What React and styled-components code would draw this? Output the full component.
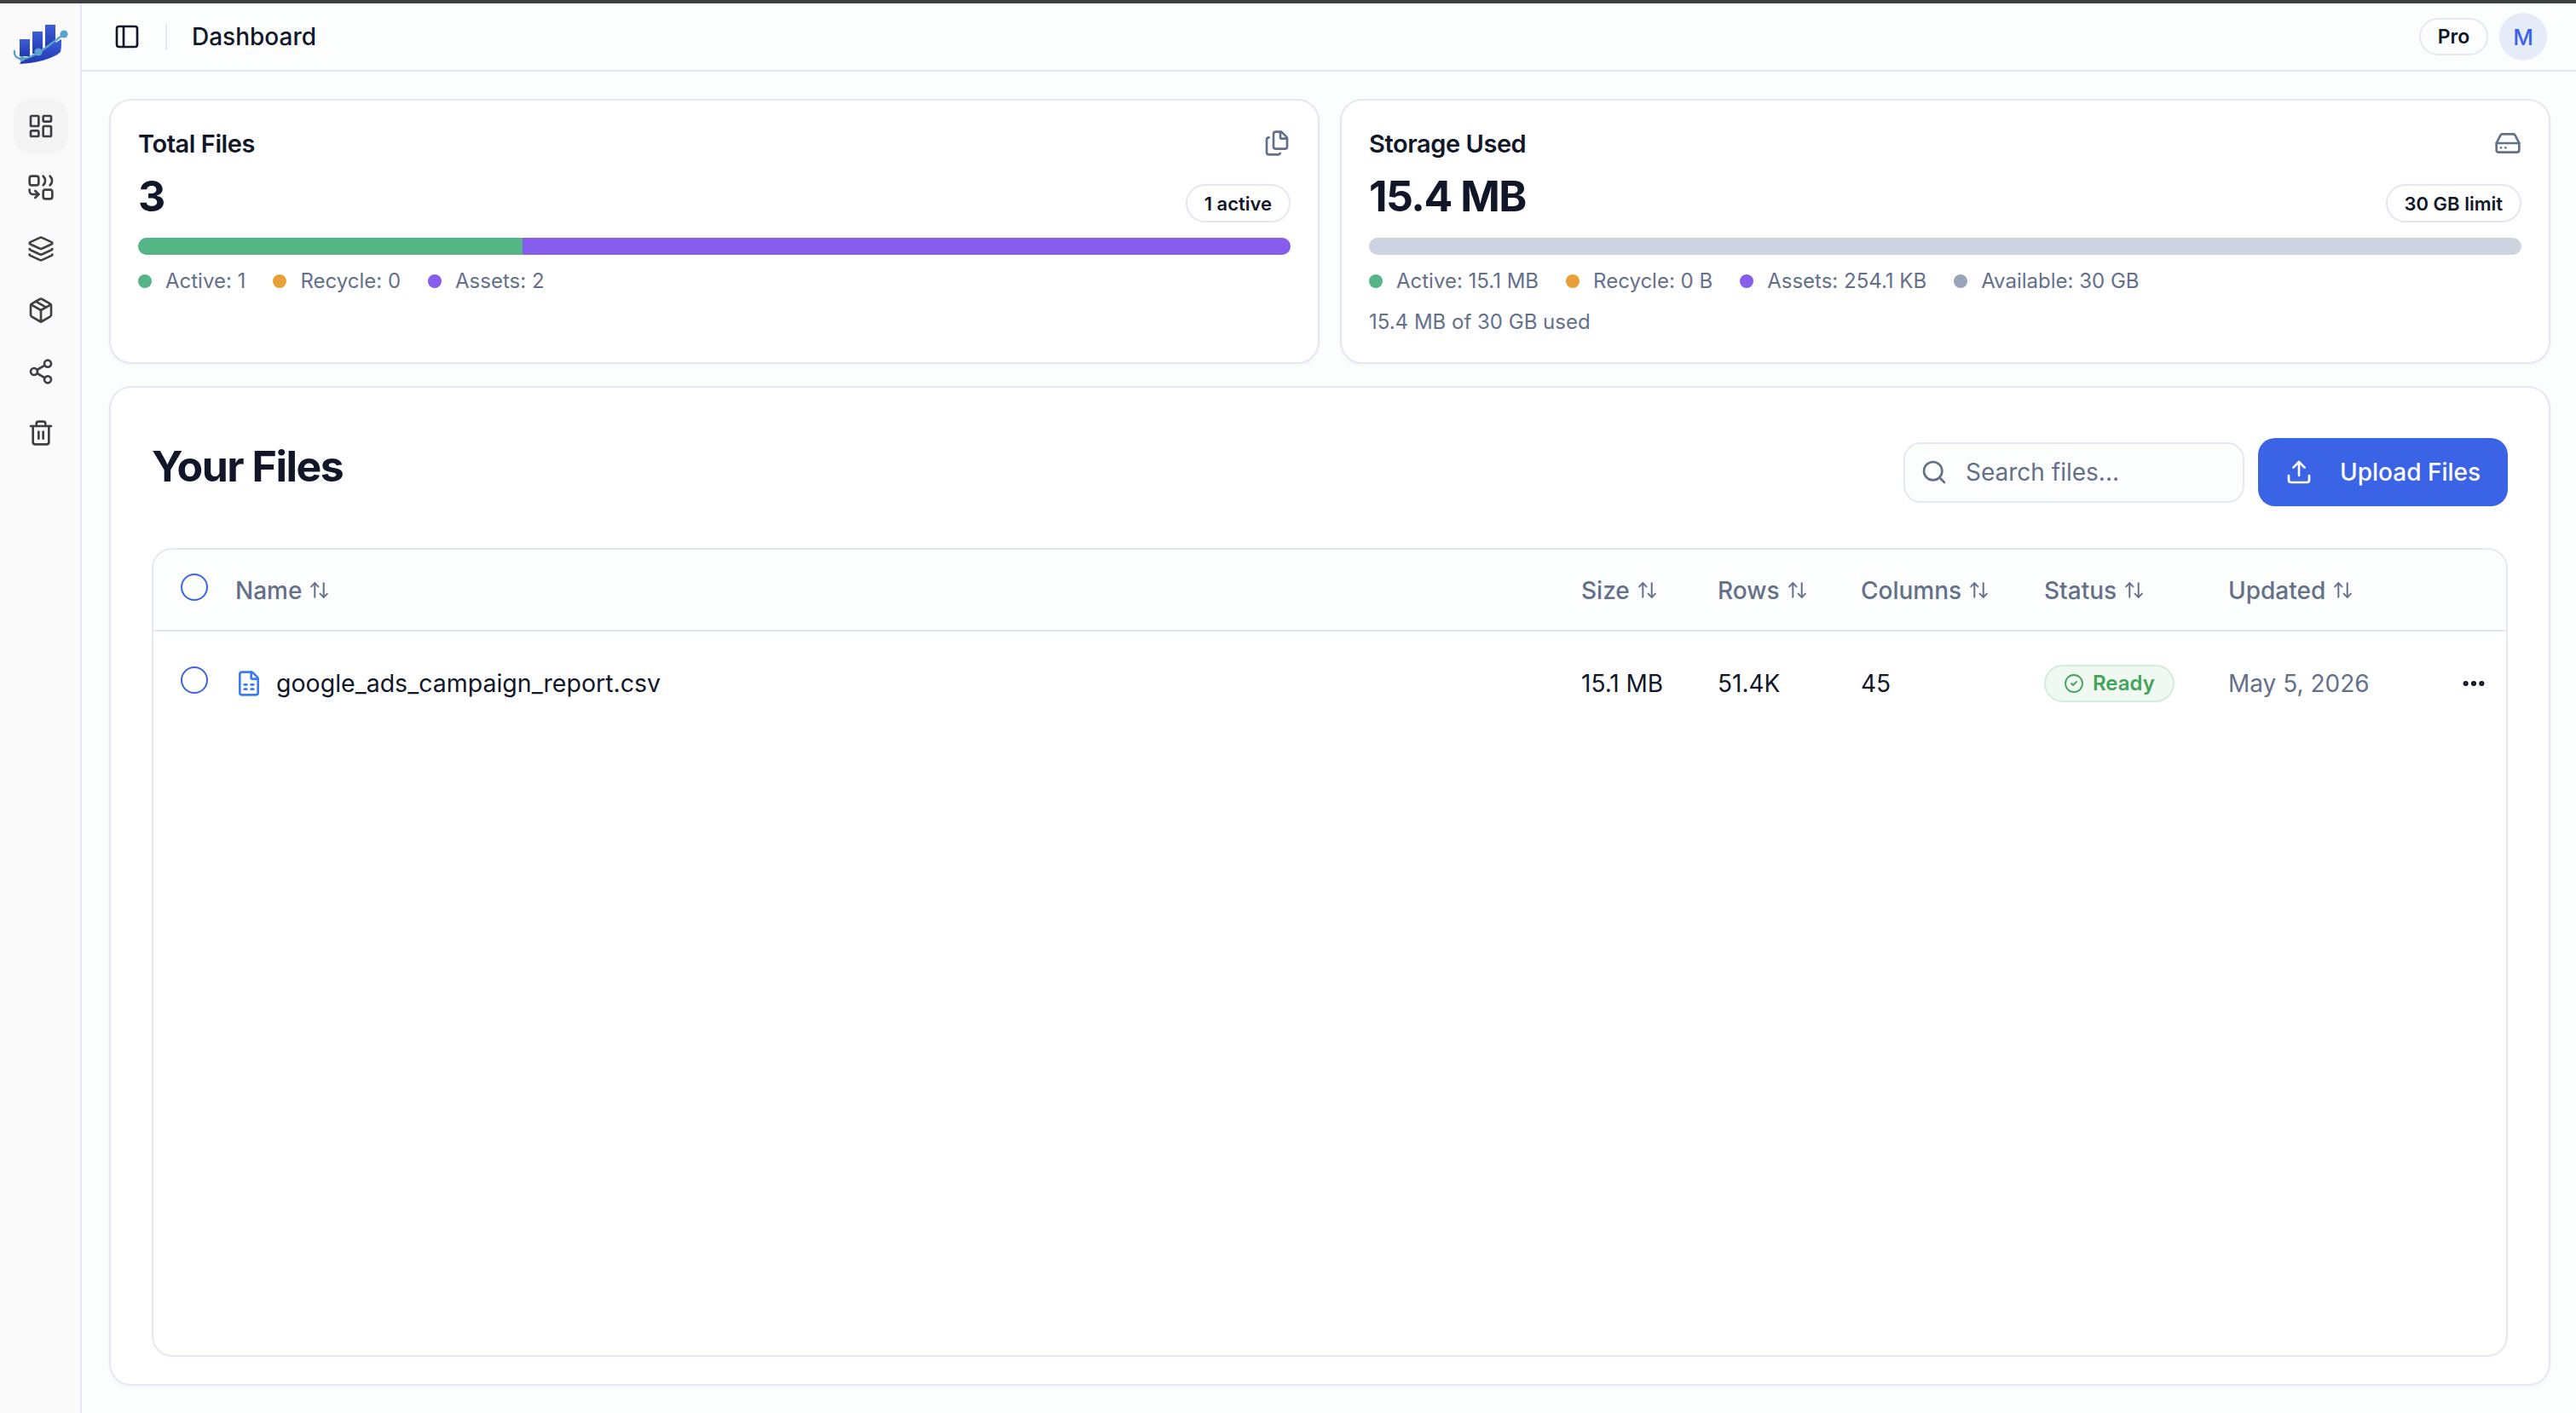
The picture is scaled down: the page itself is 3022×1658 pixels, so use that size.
import React from "react";
import styled, { createGlobalStyle } from "styled-components";
import {
  ArrowUpDown,
  CircleCheck,
  Ellipsis,
  FileSpreadsheet,
  Files,
  HardDrive,
  Layers,
  LayoutDashboard,
  Package,
  PanelLeft,
  Search,
  Share2,
  Trash2,
  Upload,
} from "lucide-react";

const GlobalStyle = createGlobalStyle`
  * { box-sizing: border-box; }
  html, body { margin: 0; padding: 0; height: 100%; }
  body {
    font-family: Inter, "Liberation Sans", sans-serif;
    background: #fcfdfd;
    color: #111729;
  }
`;

const Page = styled.div`
  min-height: 100vh;
  display: flex;
  flex-direction: column;
  border-top: 4px solid #404040;
`;

const Shell = styled.div`
  flex: 1;
  display: flex;
`;

const Sidebar = styled.aside`
  width: 96px;
  flex-shrink: 0;
  background: #fafafa;
  border-right: 2px solid #e5e8f2;
  display: flex;
  flex-direction: column;
`;

const LogoBox = styled.div`
  height: 80px;
  display: flex;
  align-items: center;
  justify-content: center;
  padding: 16px 0 0 2px;
`;

const Nav = styled.nav`
  margin-top: 32px;
  padding: 0 16px;
  display: flex;
  flex-direction: column;
  gap: 8px;
`;

const NavItem = styled.div`
  width: 64px;
  height: 64px;
  border-radius: 20px;
  display: flex;
  align-items: center;
  justify-content: center;
  color: #3f3f46;
  background: ${(p) => (p.$active ? "#f4f4f5" : "transparent")};
`;

const Main = styled.main`
  flex: 1;
  min-width: 0;
  display: flex;
  flex-direction: column;
`;

const TopBar = styled.header`
  height: 80px;
  border-bottom: 2px solid #e5e8f2;
  display: flex;
  align-items: center;
  padding: 0 34px 0 37px;
  color: #111729;
`;

const Divider = styled.div`
  width: 2px;
  height: 31px;
  background: #e5e8f2;
  margin: 0 29px;
`;

const PageTitle = styled.div`
  font-size: 28px;
  font-weight: 500;
  flex: 1;
`;

const ProPill = styled.div`
  height: 44px;
  width: 81px;
  border-radius: 22px;
  border: 2px solid #e5e8f2;
  display: flex;
  align-items: center;
  justify-content: center;
  font-size: 23px;
  font-weight: 600;
  margin-right: 13px;
`;

const Avatar = styled.div`
  width: 56px;
  height: 56px;
  border-radius: 50%;
  background: #e6ebf8;
  color: #3b63e6;
  font-size: 26px;
  font-weight: 500;
  display: flex;
  align-items: center;
  justify-content: center;
`;

const Content = styled.div`
  flex: 1;
  display: flex;
  flex-direction: column;
  gap: 26px;
  padding: 32px 30px 32px 32px;
`;

const Stats = styled.div`
  display: grid;
  grid-template-columns: 1fr 1fr;
  gap: 24px;
`;

const Card = styled.section`
  background: #fff;
  border: 2px solid #e5e8f2;
  border-radius: 26px;
  box-shadow: 0 2px 4px rgba(17, 23, 41, 0.04);
`;

const StatCard = styled(Card)`
  padding: 35px 32px 33px;
`;

const StatHead = styled.div`
  height: 30px;
  display: flex;
  align-items: center;
  justify-content: space-between;
  color: #64708a;
`;

const StatTitle = styled.h3`
  margin: 0;
  font-size: 29px;
  font-weight: 600;
  letter-spacing: -0.015em;
  color: #111729;
`;

const StatRow = styled.div`
  margin-top: 19px;
  height: 61px;
  display: flex;
  justify-content: space-between;
`;

const StatValue = styled.div`
  font-size: 50px;
  line-height: 56px;
  font-weight: 700;
  letter-spacing: -0.03em;
  color: #111729;
`;

const Badge = styled.div`
  align-self: flex-end;
  height: 45px;
  margin-bottom: 2px;
  padding: 0 20px;
  border: 2px solid #e5e8f2;
  border-radius: 23px;
  background: #fff;
  font-size: 22px;
  font-weight: 600;
  display: flex;
  align-items: center;
`;

const Bar = styled.div`
  margin-top: 16px;
  height: 20px;
  border-radius: 10px;
  overflow: hidden;
  background: #cdd4e0;
  display: flex;
`;

const BarPart = styled.div`
  background: ${(p) => p.$color};
  flex: ${(p) => p.$grow};
`;

const Legend = styled.div`
  margin-top: 17px;
  display: flex;
  gap: 32px;
`;

const LegendItem = styled.div`
  display: flex;
  align-items: center;
  gap: 16px;
  font-size: 24px;
  line-height: 28px;
  color: #64708a;
`;

const Dot = styled.span`
  width: 16px;
  height: 16px;
  border-radius: 50%;
  background: ${(p) => p.$color};
`;

const UsedNote = styled.div`
  margin-top: 20px;
  font-size: 24px;
  line-height: 28px;
  color: #64708a;
`;

const FilesCard = styled(Card)`
  flex: 1;
  display: flex;
  flex-direction: column;
  padding: 59px 48px 32px;
`;

const Toolbar = styled.div`
  display: flex;
  align-items: center;
  gap: 16px;
  margin-bottom: 49px;
`;

const FilesTitle = styled.h2`
  flex: 1;
  margin: 0 0 14px;
  font-size: 50px;
  font-weight: 700;
  letter-spacing: -0.03em;
  color: #111729;
`;

const SearchBox = styled.div`
  width: 400px;
  height: 71px;
  border: 2px solid #e5e8f2;
  border-radius: 20px;
  background: #fcfdfd;
  display: flex;
  align-items: center;
  gap: 19px;
  padding: 0 18px;
  color: #64708a;
`;

const SearchInput = styled.input`
  flex: 1;
  min-width: 0;
  border: 0;
  outline: 0;
  background: transparent;
  font: 400 28px Inter, "Liberation Sans", sans-serif;
  color: #111729;
  &::placeholder {
    color: #64708a;
    opacity: 1;
  }
`;

const UploadButton = styled.button`
  width: 293px;
  height: 80px;
  border: 0;
  border-radius: 20px;
  background: #3b63e6;
  color: #fff;
  font: 500 28px Inter, "Liberation Sans", sans-serif;
  display: flex;
  align-items: center;
  gap: 32px;
  padding: 0 0 0 32px;
`;

const Table = styled.div`
  flex: 1;
  border: 2px solid #e5e8f2;
  border-radius: 24px;
  overflow: hidden;
`;

const Row = styled.div`
  display: grid;
  grid-template-columns: 96px 1fr 160px 168px 215px 216px 276px 50px;
  align-items: center;
  height: ${(p) => (p.$head ? "96px" : "120px")};
  padding-top: 1px;
  background: ${(p) => (p.$head ? "#fcfdfd" : "#fff")};
  border-bottom: ${(p) => (p.$head ? "2px solid #e5e8f2" : "0")};
`;

const Radio = styled.span`
  display: block;
  width: 32px;
  height: 32px;
  border: 2px solid #3b63e6;
  border-radius: 50%;
  margin: 0 0 8px 32px;
`;

const HeadCell = styled.div`
  display: flex;
  align-items: center;
  gap: 8px;
  font-size: 28px;
  font-weight: 500;
  color: #64708a;
`;

const NameCell = styled.div`
  display: flex;
  align-items: center;
  gap: 16px;
  font-size: 28.5px;
  color: #3f7bf0;
`;

const FileName = styled.span`
  color: #111729;
`;

const Cell = styled.div`
  font-size: 28px;
  color: ${(p) => (p.$muted ? "#64708a" : "#111729")};
`;

const ReadyBadge = styled.div`
  display: inline-flex;
  align-items: center;
  gap: 10px;
  height: 44px;
  padding: 0 21px;
  border: 2px solid #d3edd9;
  border-radius: 22px;
  background: #f0f8f2;
  color: #43a35a;
  font-size: 24px;
  font-weight: 600;
`;

const Actions = styled.div`
  color: #111729;
  display: flex;
  margin-left: -4px;
`;

function Logo() {
  return (
    <svg width="70" height="54" viewBox="14 25 70 54">
      <defs>
        <linearGradient id="logoBlue" x1="0" y1="0" x2="0" y2="1">
          <stop offset="0" stopColor="#3b5fd8" />
          <stop offset="1" stopColor="#2437b4" />
        </linearGradient>
      </defs>
      <rect x="24" y="46" width="12" height="20" fill="url(#logoBlue)" />
      <rect x="39" y="37" width="12" height="26" fill="url(#logoBlue)" />
      <rect x="54" y="29" width="12" height="30" fill="url(#logoBlue)" />
      <path d="M24 75C42 74 62 70 72 61C73 57 73 51 73 46L46 62L27 70Z" fill="url(#logoBlue)" />
      <path d="M18 60C17 66 22 70 29 69C40 67 50 60 76 40" fill="none" stroke="#5ba3cc" strokeWidth="2.4" strokeLinecap="round" />
      <circle cx="27" cy="69" r="3" fill="#5ba3cc" />
      <circle cx="46" cy="61" r="4.6" fill="#5ba3cc" />
      <circle cx="76" cy="40" r="4.6" fill="#5ba3cc" />
    </svg>
  );
}

function SwapIcon() {
  return (
    <svg width="32" height="32" viewBox="0 0 24 24" fill="none" stroke="currentColor" strokeWidth="2" strokeLinecap="round" strokeLinejoin="round">
      <rect x="2" y="2" width="8" height="8" rx="2" />
      <path d="M14 2c1.2 1 1.8 2.4 1.8 4s-.6 3-1.8 4" />
      <path d="M20 2c1.2 1 1.8 2.4 1.8 4s-.6 3-1.8 4" />
      <rect x="14" y="14" width="8" height="8" rx="2" />
      <path d="M2 14v1a3 3 0 0 0 3 3h5" />
      <path d="m7 15 3 3-3 3" />
    </svg>
  );
}

const navIcons = [LayoutDashboard, SwapIcon, Layers, Package, Share2, Trash2];

const filesLegend = [
  { color: "#54b586", label: "Active: 1" },
  { color: "#e9a038", label: "Recycle: 0" },
  { color: "#865ded", label: "Assets: 2" },
];

const storageLegend = [
  { color: "#54b586", label: "Active: 15.1 MB" },
  { color: "#e9a038", label: "Recycle: 0 B" },
  { color: "#865ded", label: "Assets: 254.1 KB" },
  { color: "#98a4b8", label: "Available: 30 GB" },
];

const columns = ["Size", "Rows", "Columns", "Status", "Updated"];

function LegendRow({ items }) {
  return (
    <Legend>
      {items.map((item) => (
        <LegendItem key={item.label}>
          <Dot $color={item.color} />
          {item.label}
        </LegendItem>
      ))}
    </Legend>
  );
}

function SortHead({ label }) {
  return (
    <HeadCell>
      {label}
      <ArrowUpDown size={25} strokeWidth={1.9} />
    </HeadCell>
  );
}

export default function App() {
  return (
    <Page>
      <GlobalStyle />
      <Shell>
        <Sidebar>
          <LogoBox>
            <Logo />
          </LogoBox>
          <Nav>
            {navIcons.map((Icon, index) => (
              <NavItem key={index} $active={index === 0}>
                <Icon size={32} />
              </NavItem>
            ))}
          </Nav>
        </Sidebar>
        <Main>
          <TopBar>
            <PanelLeft size={32} />
            <Divider />
            <PageTitle>Dashboard</PageTitle>
            <ProPill>Pro</ProPill>
            <Avatar>M</Avatar>
          </TopBar>
          <Content>
            <Stats>
              <StatCard>
                <StatHead>
                  <StatTitle>Total Files</StatTitle>
                  <Files size={32} />
                </StatHead>
                <StatRow>
                  <StatValue>3</StatValue>
                  <Badge>1 active</Badge>
                </StatRow>
                <Bar>
                  <BarPart $color="#54b586" $grow={1} />
                  <BarPart $color="#865ded" $grow={2} />
                </Bar>
                <LegendRow items={filesLegend} />
              </StatCard>
              <StatCard>
                <StatHead>
                  <StatTitle>Storage Used</StatTitle>
                  <HardDrive size={32} />
                </StatHead>
                <StatRow>
                  <StatValue>15.4 MB</StatValue>
                  <Badge>30 GB limit</Badge>
                </StatRow>
                <Bar />
                <LegendRow items={storageLegend} />
                <UsedNote>15.4 MB of 30 GB used</UsedNote>
              </StatCard>
            </Stats>
            <FilesCard>
              <Toolbar>
                <FilesTitle>Your Files</FilesTitle>
                <SearchBox>
                  <Search size={32} />
                  <SearchInput placeholder="Search files..." />
                </SearchBox>
                <UploadButton>
                  <Upload size={32} />
                  Upload Files
                </UploadButton>
              </Toolbar>
              <Table>
                <Row $head>
                  <Radio />
                  <SortHead label="Name" />
                  {columns.map((label) => (
                    <SortHead key={label} label={label} />
                  ))}
                  <div />
                </Row>
                <Row>
                  <Radio />
                  <NameCell>
                    <FileSpreadsheet size={32} />
                    <FileName>google_ads_campaign_report.csv</FileName>
                  </NameCell>
                  <Cell>15.1 MB</Cell>
                  <Cell>51.4K</Cell>
                  <Cell>45</Cell>
                  <Cell>
                    <ReadyBadge>
                      <CircleCheck size={24} strokeWidth={1.8} />
                      Ready
                    </ReadyBadge>
                  </Cell>
                  <Cell $muted>May 5, 2026</Cell>
                  <Actions>
                    <Ellipsis size={32} strokeWidth={2.6} />
                  </Actions>
                </Row>
              </Table>
            </FilesCard>
          </Content>
        </Main>
      </Shell>
    </Page>
  );
}
